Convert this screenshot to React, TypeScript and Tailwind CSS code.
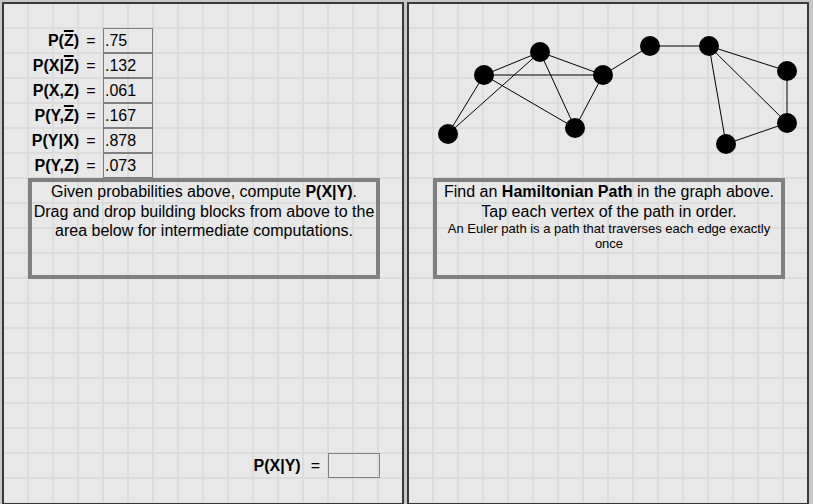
const gridBg =
  'bg-[#e8e8e8] bg-[linear-gradient(to_right,transparent_23px,#dcdcdc_23px),linear-gradient(to_bottom,transparent_23px,#dcdcdc_23px)] bg-[size:25px_25px]';

const rows = [
  { label: <>P(<span className="overline decoration-[2px]">Z</span>)</>, value: '.75' },
  { label: <>P(X|<span className="overline decoration-[2px]">Z</span>)</>, value: '.132' },
  { label: <>P(X,Z)</>, value: '.061' },
  { label: <>P(Y,<span className="overline decoration-[2px]">Z</span>)</>, value: '.167' },
  { label: <>P(Y|X)</>, value: '.878' },
  { label: <>P(Y,Z)</>, value: '.073' },
];

const nodes: Array<[number, number]> = [
  [39, 130],
  [75, 71],
  [131, 48],
  [194, 71],
  [166, 124],
  [241, 42],
  [300, 42],
  [378, 67],
  [378, 119],
  [317, 140],
];

const edges: Array<[number, number]> = [
  [0, 1],
  [0, 2],
  [1, 2],
  [1, 3],
  [1, 4],
  [2, 3],
  [2, 4],
  [3, 4],
  [3, 5],
  [5, 6],
  [6, 7],
  [6, 8],
  [6, 9],
  [7, 8],
  [8, 9],
];

function ProbabilityPanel() {
  return (
    <div className={`w-[402px] h-[503px] border-2 border-[#3a3a3a] flex flex-col ${gridBg}`}>
      <div className="mt-[24px] flex flex-col">
        {rows.map((row, i) => (
          <div key={i} className="flex items-center h-[25px]">
            <div className="w-[75px] text-right font-bold text-[16px]">{row.label}</div>
            <div className="w-[24px] text-center text-[16px]">=</div>
            <div className="w-[50px] h-[25px] border border-[#808080] flex items-center pl-[1px] text-[16px]">
              {row.value}
            </div>
          </div>
        ))}
      </div>
      <div className="ml-[24px] w-[352px] h-[101px] border-4 border-[#808080] text-center text-[16px] leading-[19.5px]">
        Given probabilities above, compute <b>P(X|Y)</b>.
        <br />
        Drag and drop building blocks from above to the area below for intermediate computations.
      </div>
      <div className="mt-[174px] flex items-center justify-end pr-[22px]">
        <span className="font-bold text-[16px]">P(X|Y)</span>
        <span className="ml-[10px] mr-[8px] text-[16px]">=</span>
        <div className="w-[52px] h-[25px] border border-[#808080]" />
      </div>
    </div>
  );
}

function GraphPanel() {
  return (
    <div className={`w-[402px] h-[503px] border-2 border-[#3a3a3a] flex flex-col ${gridBg}`}>
      <svg width="398" height="174" viewBox="0 0 398 174">
        {edges.map(([a, b], i) => (
          <line
            key={i}
            x1={nodes[a][0]}
            y1={nodes[a][1]}
            x2={nodes[b][0]}
            y2={nodes[b][1]}
            stroke="#000"
            strokeWidth="1"
          />
        ))}
        {nodes.map(([x, y], i) => (
          <circle key={i} cx={x} cy={y} r="10" fill="#000" />
        ))}
      </svg>
      <div className="ml-[24px] w-[352px] h-[101px] border-4 border-[#808080] text-center">
        <div className="text-[16px] leading-[19.5px]">
          Find an <b>Hamiltonian Path</b> in the graph above.
        </div>
        <div className="text-[16px] leading-[19.5px]">Tap each vertex of the path in order.</div>
        <div className="text-[13px] leading-[15px] px-[8px]">
          An Euler path is a path that traverses each edge exactly once
        </div>
      </div>
    </div>
  );
}

export default function App() {
  return (
    <div className="w-[813px] h-[504px] overflow-hidden bg-[#c6c6c6] flex gap-[3px] pl-[2px] pt-[2px] text-black font-['Liberation_Sans',Arial,sans-serif]">
      <ProbabilityPanel />
      <GraphPanel />
    </div>
  );
}
